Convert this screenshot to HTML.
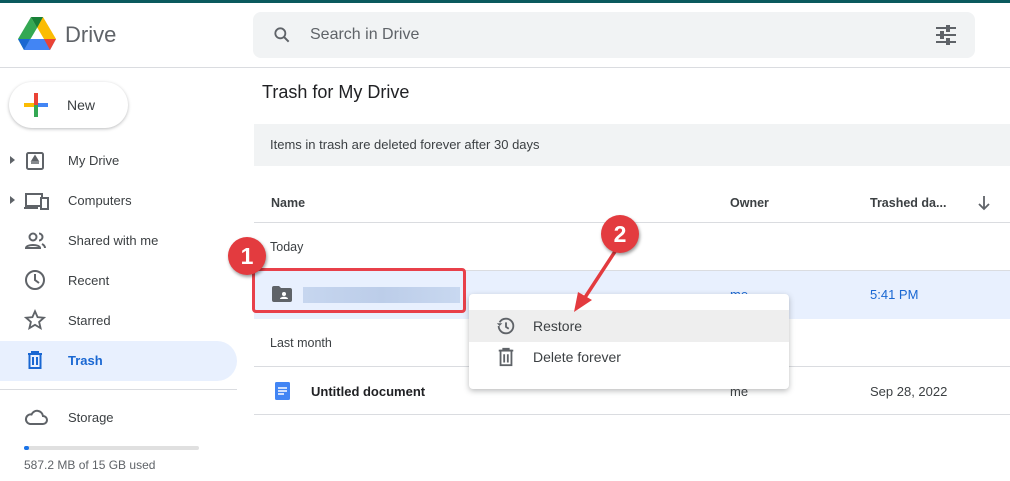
<!DOCTYPE html>
<html><head><style>
*{margin:0;padding:0;box-sizing:border-box}
body{width:1010px;height:481px;overflow:hidden;background:#fff;font-family:"Liberation Sans",Arial,sans-serif;color:#3c4043;position:relative}
.a{position:absolute}
.nav{position:absolute;left:68px;font-size:13px;color:#3c4043}
.ic{position:absolute;left:24px}
.sm{font-size:13px}
</style></head><body>
<div class="a" style="left:0;top:0;width:1010px;height:3px;background:#0b5a5e"></div>
<!-- logo -->
<svg class="a" style="left:18px;top:17px" width="38" height="34" viewBox="0 0 38 34">
<path d="M13 0h12l13 22h-12z" fill="#fbbc04"/>
<path d="M13 0L0 22l6 11 13-22z" fill="#34a853"/>
<path d="M6 33h26l6-11H12z" fill="#4285f4"/>
<path d="M6 33l6-11H0z" fill="#1967d2"/>
<path d="M32 33l6-11H26z" fill="#ea4335"/>
<path d="M13 0l6 11 6-11z" fill="#188038"/>
</svg>
<div class="a" style="left:65px;top:22px;font-size:22px;color:#5f6368">Drive</div>
<div class="a" style="left:253px;top:12px;width:722px;height:46px;background:#f1f3f4;border-radius:8px"></div>
<svg class="a" style="left:272px;top:25px" width="20" height="20" viewBox="0 0 24 24"><circle cx="10" cy="10" r="6" fill="none" stroke="#5f6368" stroke-width="2.2"/><path d="M14.5 14.5L20 20" stroke="#5f6368" stroke-width="2.4"/></svg>
<div class="a" style="left:310px;top:26px;font-size:16px;color:#5f6368">Search in Drive</div>
<svg class="a" style="left:935px;top:25px" width="22" height="20" viewBox="0 0 22 20"><g stroke="#5f6368" stroke-width="2"><path d="M1 3h20M1 10h20M1 17h20"/></g><g fill="#f1f3f4" stroke="#5f6368" stroke-width="2"><rect x="12" y="0" width="2" height="6"/><rect x="6" y="7" width="2" height="6"/><rect x="12" y="14" width="2" height="6"/></g></svg>
<div class="a" style="left:0;top:67px;width:1010px;height:1px;background:#dadce0"></div>
<!-- new -->
<div class="a" style="left:9px;top:82px;width:119px;height:46px;border-radius:24px;background:#fff;box-shadow:0 1px 3px rgba(60,64,67,.35)"></div>
<div class="a" style="left:24px;top:103px;width:12px;height:4px;background:#fbbc04"></div>
<div class="a" style="left:36px;top:103px;width:12px;height:4px;background:#4285f4"></div>
<div class="a" style="left:34px;top:93px;width:4px;height:12px;background:#ea4335"></div>
<div class="a" style="left:34px;top:105px;width:4px;height:12px;background:#34a853"></div>
<div class="a" style="left:67px;top:97px;font-size:14px;color:#3c4043">New</div>
<!-- nav -->
<div class="a" style="left:10px;top:156px;border-left:5px solid #5f6368;border-top:4px solid transparent;border-bottom:4px solid transparent"></div>
<div class="a" style="left:10px;top:196px;border-left:5px solid #5f6368;border-top:4px solid transparent;border-bottom:4px solid transparent"></div>
<svg class="ic" style="top:150px" width="22" height="22" viewBox="0 0 22 22"><rect x="3" y="3" width="16" height="16" rx="1.5" fill="none" stroke="#5f6368" stroke-width="2"/><path d="M11 6l3 5H8z M7 13h8" stroke="#5f6368" stroke-width="1.6" fill="#5f6368"/></svg>
<div class="nav" style="top:153px">My Drive</div>
<svg class="ic" style="top:190px" width="26" height="22" viewBox="0 0 26 22"><rect x="2" y="4" width="16" height="12" fill="none" stroke="#5f6368" stroke-width="2"/><path d="M0 18h14" stroke="#5f6368" stroke-width="2"/><rect x="17" y="8" width="7" height="11" fill="#fff" stroke="#5f6368" stroke-width="2"/></svg>
<div class="nav" style="top:193px">Computers</div>
<svg class="ic" style="top:230px" width="24" height="22" viewBox="0 0 24 22"><circle cx="9" cy="7" r="3.5" fill="none" stroke="#5f6368" stroke-width="2"/><path d="M2 18c0-4 14-4 14 0z" fill="none" stroke="#5f6368" stroke-width="2"/><path d="M15 3.5a3.5 3.5 0 010 7M18 14c2 1 3 2 3 4" fill="none" stroke="#5f6368" stroke-width="2"/></svg>
<div class="nav" style="top:233px">Shared with me</div>
<svg class="ic" style="top:269px" width="22" height="22" viewBox="0 0 22 22"><circle cx="11" cy="11" r="9" fill="none" stroke="#5f6368" stroke-width="2"/><path d="M11 5v6l4 3" fill="none" stroke="#5f6368" stroke-width="2"/></svg>
<div class="nav" style="top:273px">Recent</div>
<svg class="ic" style="top:309px" width="22" height="22" viewBox="0 0 24 24"><path d="M12 2.5l2.8 6.4 6.9.6-5.2 4.6 1.6 6.8L12 17.3l-6.1 3.6 1.6-6.8-5.2-4.6 6.9-.6z" fill="none" stroke="#5f6368" stroke-width="2"/></svg>
<div class="nav" style="top:313px">Starred</div>
<div class="a" style="left:0;top:341px;width:237px;height:40px;background:#e8f0fe;border-radius:0 20px 20px 0"></div>
<svg class="ic" style="top:349px" width="22" height="22" viewBox="0 0 22 22"><path d="M4 5h14M8 5V3h6v2" stroke="#1967d2" stroke-width="2" fill="none"/><rect x="5.5" y="5" width="11" height="14" fill="none" stroke="#1967d2" stroke-width="2"/><path d="M9 8v8M13 8v8" stroke="#1967d2" stroke-width="2"/></svg>
<div class="nav" style="top:353px;color:#1967d2;font-weight:bold">Trash</div>
<div class="a" style="left:0;top:389px;width:237px;height:1px;background:#dadce0"></div>
<svg class="ic" style="top:408px" width="24" height="18" viewBox="0 0 24 18"><path d="M6 16h13a4 4 0 000-8 6 6 0 00-11.5-1.5A4.8 4.8 0 006 16z" fill="none" stroke="#5f6368" stroke-width="2"/></svg>
<div class="nav" style="top:410px">Storage</div>
<div class="a" style="left:24px;top:446px;width:175px;height:4px;background:#e0e0e0;border-radius:2px"></div>
<div class="a" style="left:24px;top:446px;width:5px;height:4px;background:#1a73e8;border-radius:2px"></div>
<div class="a" style="left:24px;top:458px;font-size:12px;color:#5f6368">587.2 MB of 15 GB used</div>
<!-- main -->
<div class="a" style="left:262px;top:82px;font-size:18px;color:#202124">Trash for My Drive</div>
<div class="a" style="left:254px;top:124px;width:756px;height:42px;background:#f1f3f4"></div>
<div class="a sm" style="left:270px;top:137px;color:#3c4043">Items in trash are deleted forever after 30 days</div>
<div class="a sm" style="left:271px;top:196px;font-weight:bold;font-size:12.5px">Name</div>
<div class="a sm" style="left:730px;top:196px;font-weight:bold;font-size:12.5px">Owner</div>
<div class="a sm" style="left:870px;top:196px;font-weight:bold;font-size:12.5px">Trashed da...</div>
<svg class="a" style="left:977px;top:195px" width="14" height="16" viewBox="0 0 14 16"><path d="M7 1v13M2 9l5 5 5-5" fill="none" stroke="#5f6368" stroke-width="1.8"/></svg>
<div class="a" style="left:254px;top:222px;width:756px;height:1px;background:#dadce0"></div>
<div class="a sm" style="left:270px;top:240px;font-size:12.5px">Today</div>
<div class="a" style="left:254px;top:270px;width:756px;height:49px;background:#e8f0fe;border-top:1px solid #dadce0"></div>
<svg class="a" style="left:272px;top:286px" width="20" height="16" viewBox="0 0 20 16"><path d="M0 2a2 2 0 012-2h5l2 2h9a2 2 0 012 2v10a2 2 0 01-2 2H2a2 2 0 01-2-2z" fill="#5f6368"/><circle cx="12" cy="8" r="2" fill="#fff"/><path d="M8 13c0-3 8-3 8 0z" fill="#fff"/></svg>
<div class="a" style="left:303px;top:287px;width:157px;height:16px;background:linear-gradient(90deg,#c6d6ef,#bccde9,#c8d8f0)"></div>
<div class="a" style="left:252px;top:268px;width:214px;height:45px;border:3px solid #e8404a;border-radius:4px"></div>
<div class="a" style="left:228px;top:237px;width:38px;height:38px;border-radius:50%;background:#e33b3f;color:#fff;font-size:23px;font-weight:bold;text-align:center;line-height:38px;box-shadow:1px 2px 3px rgba(0,0,0,.4)">1</div>
<div class="a sm" style="left:730px;top:287px;color:#1967d2">me</div>
<div class="a sm" style="left:870px;top:287px;color:#1967d2">5:41 PM</div>
<div class="a sm" style="left:270px;top:336px;font-size:12.5px">Last month</div>
<div class="a" style="left:254px;top:366px;width:756px;height:1px;background:#dadce0"></div>
<svg class="a" style="left:275px;top:382px" width="15" height="18" viewBox="0 0 15 18"><rect width="15" height="18" rx="1.5" fill="#4285f4"/><path d="M3 6h9M3 9h9M3 12h6" stroke="#fff" stroke-width="1.5"/></svg>
<div class="a sm" style="left:311px;top:384px;font-weight:bold;color:#202124">Untitled document</div>
<div class="a sm" style="left:730px;top:384px">me</div>
<div class="a sm" style="left:870px;top:384px">Sep 28, 2022</div>
<div class="a" style="left:254px;top:414px;width:756px;height:1px;background:#dadce0"></div>
<!-- menu -->
<div class="a" style="left:469px;top:294px;width:320px;height:95px;background:#fff;border-radius:4px;box-shadow:0 2px 6px rgba(60,64,67,.35)"></div>
<div class="a" style="left:469px;top:310px;width:320px;height:32px;background:#eeeeee"></div>
<svg class="a" style="left:495px;top:315px" width="22" height="22" viewBox="0 0 24 24"><path d="M4 12a8 8 0 108-8 8 8 0 00-7 4" fill="none" stroke="#5f6368" stroke-width="2"/><path d="M2 9l3 3 3-3" fill="#5f6368"/><path d="M12 8v5l3 2" fill="none" stroke="#5f6368" stroke-width="2"/></svg>
<div class="a" style="left:533px;top:318px;font-size:14px;color:#3c4043">Restore</div>
<svg class="a" style="left:496px;top:347px" width="20" height="20" viewBox="0 0 22 22"><path d="M3 4h16M8 4V2h6v2" stroke="#5f6368" stroke-width="2" fill="none"/><rect x="5" y="4" width="12" height="16" fill="none" stroke="#5f6368" stroke-width="2"/><path d="M9 8v9M13 8v9" stroke="#5f6368" stroke-width="2"/></svg>
<div class="a" style="left:533px;top:349px;font-size:14px;color:#3c4043">Delete forever</div>
<!-- arrow 2 -->
<svg class="a" style="left:560px;top:230px" width="70" height="90" viewBox="0 0 70 90"><path d="M56 20L22 72" stroke="#e33b3f" stroke-width="3.5"/><path d="M14 82l4-20 14 8z" fill="#e33b3f"/></svg>
<div class="a" style="left:601px;top:215px;width:38px;height:38px;border-radius:50%;background:#e33b3f;color:#fff;font-size:23px;font-weight:bold;text-align:center;line-height:38px;box-shadow:1px 2px 3px rgba(0,0,0,.4)">2</div>
</body></html>
